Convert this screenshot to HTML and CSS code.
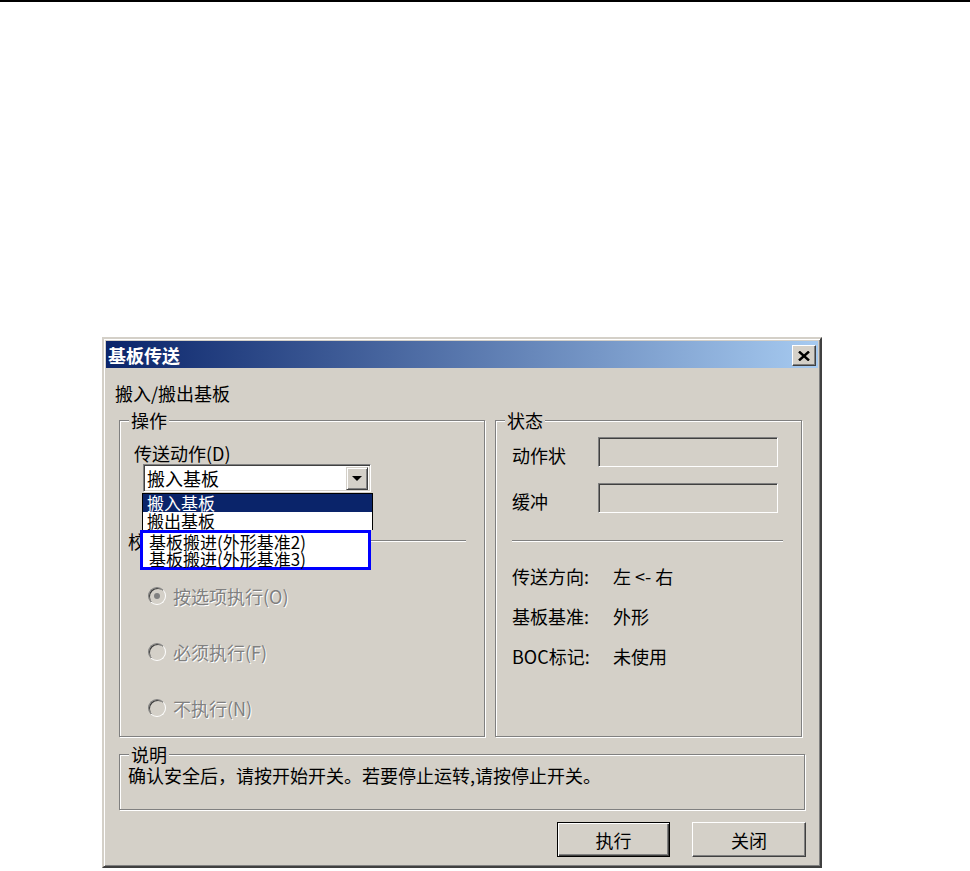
FILE: index.html
```html
<!DOCTYPE html>
<html lang="zh-CN">

    <head>
        <meta charset="UTF-8">
        <meta name="viewport" content="width=device-width, initial-scale=1.0">
        <title>基板传送</title>
        <link rel="stylesheet" href="styles.css">
    </head>

    <body>
        <div class="rule"></div>

        <div class="page">
            <div class="dialog">
                <div class="titlebar">
                    <span>基板传送</span>
                    <span class="close">
                        <svg width="12" height="10" viewBox="0 0 12 10">
                            <path d="M1 0.5 L11 9.5 M11 0.5 L1 9.5" stroke="#000" stroke-width="2.4" fill="none"/>
                        </svg>
                    </span>
                </div>

                <div class="content">
                    <div class="subtitle">搬入/搬出基板</div>

                    <div class="groups">
                        <fieldset class="group group-op">
                            <legend>操作</legend>
                            <div class="field-label">传送动作(D)</div>

                            <div class="combo">
                                <span>搬入基板</span>
                                <span class="drop-btn"><span class="arrow"></span></span>

                                <div class="droplist">
                                    <div class="drop-top">
                                        <div class="opt selected">搬入基板</div>
                                        <div class="opt">搬出基板</div>
                                    </div>
                                    <div class="mark">
                                        <div class="opt">基板搬进(外形基准2)</div>
                                        <div class="opt">基板搬进(外形基准3)</div>
                                    </div>
                                </div>
                            </div>

                            <div class="sep-row">
                                <span>校验</span>
                                <span class="sep"></span>
                            </div>

                            <div class="radio-row first">
                                <span class="radio checked"></span>
                                <span class="disabled">按选项执行(O)</span>
                            </div>
                            <div class="radio-row">
                                <span class="radio"></span>
                                <span class="disabled">必须执行(F)</span>
                            </div>
                            <div class="radio-row">
                                <span class="radio"></span>
                                <span class="disabled">不执行(N)</span>
                            </div>
                        </fieldset>

                        <fieldset class="group group-state">
                            <legend>状态</legend>
                            <div class="state-row first">
                                <span class="state-label">动作状</span>
                                <span class="sunken"></span>
                            </div>
                            <div class="state-row">
                                <span class="state-label">缓冲</span>
                                <span class="sunken"></span>
                            </div>

                            <div class="hsep"></div>

                            <div class="info">
                                <div class="info-row"><span class="info-label">传送方向:</span><span>左 &lt;- 右</span></div>
                                <div class="info-row"><span class="info-label">基板基准:</span><span>外形</span></div>
                                <div class="info-row last"><span class="info-label">BOC标记:</span><span>未使用</span></div>
                            </div>
                        </fieldset>
                    </div>

                    <fieldset class="group group-note">
                        <legend>说明</legend>
                        <div class="note">确认安全后，请按开始开关。若要停止运转,请按停止开关。</div>
                    </fieldset>

                    <div class="buttons">
                        <button class="btn default">执行</button>
                        <button class="btn">关闭</button>
                    </div>
                </div>
            </div>
        </div>
    </body>

</html>
```

FILE: styles.css
```css
body {
    margin: 0;
    background: #fff;
    font-family: "Noto Sans CJK SC", sans-serif;
    font-size: 18px;
    line-height: 20px;
    color: #000;
}

.rule {
    height: 2px;
    background: #000;
}

.page {
    padding: 335px 0 0 102px;
}

.dialog {
    width: 720px;
    height: 531px;
    box-sizing: border-box;
    padding: 2px;
    background: #d4d0c8;
    border: 2px solid;
    border-color: #d4d0c8 #404040 #404040 #d4d0c8;
    box-shadow: inset 1px 1px 0 #fff, inset -1px -1px 0 #808080;
    display: flex;
    flex-direction: column;
}

.titlebar {
    height: 27px;
    padding: 0 2px;
    display: flex;
    align-items: center;
    justify-content: space-between;
    background: linear-gradient(to right, #0a246a, #a6caf0);
    color: #fff;
    font-weight: bold;
}

.close {
    width: 24px;
    height: 21px;
    box-sizing: border-box;
    margin-top: 2px;
    display: flex;
    align-items: center;
    justify-content: center;
    background: #d4d0c8;
    border: 1px solid;
    border-color: #fff #404040 #404040 #fff;
    box-shadow: inset -1px -1px 0 #808080;
}

.content {
    padding-top: 15px;
}

.subtitle {
    padding-left: 9px;
}

.groups {
    display: flex;
    gap: 10px;
    margin: 7px 0 0 13px;
}

.group {
    margin: 0;
    padding: 0;
    min-width: 0;
    box-sizing: border-box;
    border: 1px solid #808080;
    box-shadow: inset 1px 1px 0 #fff, 1px 1px 0 #fff;
}

.group legend {
    margin-left: 9px;
    padding: 0 2px;
    background: #d4d0c8;
    line-height: 20px;
}

.group-op {
    width: 366px;
    height: 327px;
}

.group-state {
    width: 307px;
    height: 327px;
}

/* operation group */
.field-label {
    margin-top: 13px;
    padding-left: 14px;
}

.combo {
    position: relative;
    width: 228px;
    height: 28px;
    box-sizing: border-box;
    margin: 1px 0 0 23px;
    padding: 2px 2px 2px 3px;
    display: flex;
    align-items: center;
    justify-content: space-between;
    background: #fff;
    border: 1px solid;
    border-color: #808080 #fff #fff #808080;
    box-shadow: inset 1px 1px 0 #404040, inset -1px -1px 0 #d4d0c8;
}

.drop-btn {
    width: 22px;
    height: 23px;
    box-sizing: border-box;
    display: flex;
    align-items: center;
    justify-content: center;
    background: #d4d0c8;
    border: 1px solid;
    border-color: #d4d0c8 #404040 #404040 #d4d0c8;
    box-shadow: inset 1px 1px 0 #fff, inset -1px -1px 0 #808080;
}

.arrow {
    width: 0;
    height: 0;
    border-left: 5px solid transparent;
    border-right: 5px solid transparent;
    border-top: 5px solid #000;
}

.droplist {
    position: absolute;
    top: 28px;
    left: -2px;
    width: 231px;
    z-index: 2;
    font-size: 17px;
}

.drop-top {
    background: #fff;
    border: 1px solid #000;
    border-bottom: none;
}

.opt {
    line-height: 18px;
    padding-left: 4px;
    white-space: nowrap;
}

.opt.selected {
    background: #0a246a;
    color: #fff;
}

.mark {
    width: 231px;
    box-sizing: border-box;
    margin-left: -2px;
    padding-left: 2px;
    background: #fff;
    border: 3px solid #0000ff;
}

.mark .opt {
    line-height: 17px;
}

.sep-row {
    display: flex;
    align-items: center;
    gap: 4px;
    margin: 39px 18px 0 8px;
}

.sep,
.hsep {
    flex: 1;
    height: 0;
    border-top: 1px solid #808080;
    border-bottom: 1px solid #fff;
}

.radio-row {
    display: flex;
    align-items: center;
    gap: 7px;
    margin-top: 36px;
    padding-left: 28px;
}

.radio-row.first {
    margin-top: 35px;
}

.radio {
    position: relative;
    width: 18px;
    height: 18px;
    box-sizing: border-box;
    border-radius: 50%;
    border: 1px solid;
    border-color: #808080 #fff #fff #808080;
    box-shadow: inset 1px 1px 0 #404040;
    background: #d4d0c8;
}

.radio.checked::after {
    content: "";
    position: absolute;
    left: 5px;
    top: 5px;
    width: 6px;
    height: 6px;
    border-radius: 50%;
    background: #808080;
}

.disabled {
    color: #808080;
    text-shadow: 1px 1px 0 #fff;
}

/* state group */
.state-row {
    display: flex;
    align-items: center;
    height: 30px;
    margin-top: 16px;
    padding-left: 16px;
}

.state-row.first {
    margin-top: 7px;
}

.state-label {
    width: 86px;
    padding-top: 5px;
}

.sunken {
    width: 180px;
    height: 30px;
    box-sizing: border-box;
    border: 1px solid;
    border-color: #808080 #fff #fff #808080;
    box-shadow: inset 1px 1px 0 #404040, inset -1px -1px 0 #d4d0c8;
}

.hsep {
    margin: 27px 18px 0 16px;
}

.info {
    padding: 24px 0 0 16px;
}

.info-row {
    display: flex;
    margin-bottom: 20px;
}

.info-row.last {
    margin-top: 3px;
}

.info-label {
    width: 101px;
}

/* note group */
.group-note {
    width: 686px;
    height: 66px;
    margin: 7px 0 0 13px;
}

.note {
    margin-top: 1px;
    padding-left: 8px;
}

.buttons {
    display: flex;
    justify-content: flex-end;
    gap: 22px;
    margin: 12px 12px 0 0;
}

.btn {
    width: 114px;
    height: 35px;
    padding: 0;
    font-family: inherit;
    font-size: 18px;
    color: #000;
    background: #d4d0c8;
    border: 1px solid;
    border-color: #fff #404040 #404040 #fff;
    box-shadow: inset -1px -1px 0 #808080;
}

.btn.default {
    width: 113px;
    border: 1px solid #000;
    box-shadow: inset 1px 1px 0 #fff, inset -1px -1px 0 #404040, inset -2px -2px 0 #808080;
}
```
